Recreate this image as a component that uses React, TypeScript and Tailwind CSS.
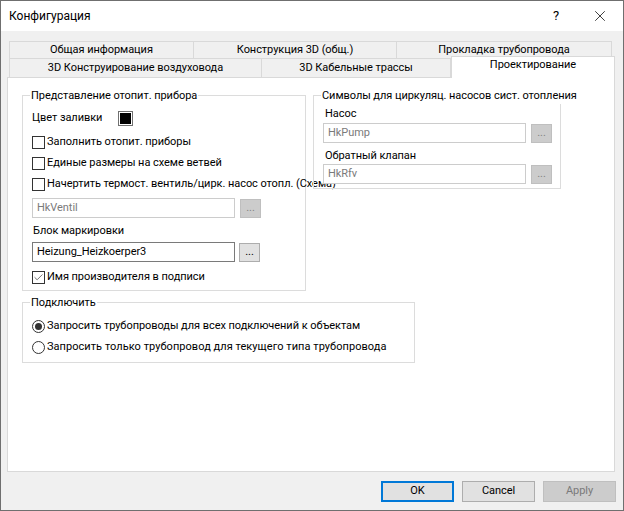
import { Check, X } from 'lucide-react'

const font = "[font-family:Roboto,sans-serif]"

function CheckRow({ label, checked, className }: { label: string; checked?: boolean; className?: string }) {
  return (
    <div className={`flex items-center h-[14px] whitespace-nowrap ${className ?? ''}`}>
      <div className="w-[13px] h-[13px] border border-[#333333] bg-white flex items-center justify-center shrink-0">
        {checked && <Check size={11} strokeWidth={1.5} className="text-[#333333]" />}
      </div>
      <span className="ml-[2px]">{label}</span>
    </div>
  )
}

function RadioRow({ label, checked, className }: { label: string; checked?: boolean; className?: string }) {
  return (
    <div className={`flex items-center h-[14px] whitespace-nowrap ${className ?? ''}`}>
      <div className="w-[13px] h-[13px] rounded-full border border-[#333333] bg-white flex items-center justify-center shrink-0">
        {checked && <div className="w-[7px] h-[7px] rounded-full bg-[#333333]" />}
      </div>
      <span className="ml-[2px]">{label}</span>
    </div>
  )
}

function PathField({ value, disabled, className }: { value: string; disabled?: boolean; className?: string }) {
  return (
    <div className={`flex items-center relative z-10 ${className ?? ''}`}>
      <div className={`w-[203px] h-[20px] border bg-white px-[4px] leading-[18px] ${disabled ? 'border-[#cccccc] text-[#7a7a7a]' : 'border-[#7a7a7a] text-black'}`}>
        {value}
      </div>
      <div className={`w-[21px] h-[19px] border flex items-center justify-center leading-none pb-[2px] ${disabled ? 'ml-[5px] bg-[#cccccc] border-[#bfbfbf] text-[#838383]' : 'ml-[4px] bg-[#e1e1e1] border-[#adadad] text-black'}`}>
        ...
      </div>
    </div>
  )
}

function Group({ title, className, children }: { title: string; className?: string; children: React.ReactNode }) {
  return (
    <div className={`relative border border-[#dcdcdc] ${className ?? ''}`}>
      <span className="absolute left-[7px] top-[-8px] bg-white px-[1px] leading-[16px] whitespace-nowrap z-10">{title}</span>
      {children}
    </div>
  )
}

function Tab({ label, className }: { label: string; className?: string }) {
  return (
    <div className={`flex items-center justify-center pt-[1px] bg-[#f0f0f0] border border-[#d9d9d9] border-b-0 border-l-0 first:border-l ${className ?? ''}`}>
      {label}
    </div>
  )
}

export default function App() {
  return (
    <div className={`w-[624px] h-[511px] border border-[#6f6f6f] flex flex-col overflow-hidden text-[11px] tracking-[-0.05px] text-black ${font}`}>
      {/* Title bar */}
      <div className="h-[30px] bg-white flex items-center shrink-0">
        <span className="ml-[8px] text-[12px] tracking-normal">Конфигурация</span>
        <span className="ml-auto text-[13px]">?</span>
        <X size={18} strokeWidth={1} className="ml-[32px] mr-[14px]" />
      </div>

      {/* Dialog body */}
      <div className="flex-1 bg-[#f0f0f0] flex flex-col px-[6px] pt-[10px]">
        <div className="flex pl-[2px] h-[17px]">
          <Tab label="Общая информация" className="w-[185px]" />
          <Tab label="Конструкция 3D (общ.)" className="w-[203px]" />
          <Tab label="Прокладка трубопровода" className="w-[215px]" />
        </div>
        <div className="flex pl-[2px] h-[19px] items-end relative">
          <Tab label="3D Конструирование воздуховода" className="w-[253px] h-[19px]" />
          <Tab label="3D Кабельные трассы" className="w-[189px] h-[19px]" />
          <div className="w-[164px] h-[22px] -mb-px bg-white border border-[#d9d9d9] border-b-0 z-10 flex justify-center relative">
            Проектирование
          </div>
        </div>

        <div className="h-[395px] w-[608px] bg-white border border-[#d9d9d9] pl-[14px] pt-[17px]">
          <div className="flex items-start">
            <Group title="Представление отопит. прибора" className="w-[284px] h-[196px] pl-[9px] pt-[14px]">
              <div className="flex items-center h-[16px]">
                <span className="w-[86px] pt-[1px]">Цвет заливки</span>
                <div className="w-[15px] h-[15px] border border-[#707070] p-[1px]">
                  <div className="w-full h-full bg-black" />
                </div>
              </div>
              <CheckRow label="Заполнить отопит. приборы" className="mt-[9px]" />
              <CheckRow label="Единые размеры на схеме ветвей" className="mt-[7px]" />
              <CheckRow label="Начертить термост. вентиль/цирк. насос отопл. (Схема)" className="mt-[7px]" />
              <PathField value="HkVentil" disabled className="mt-[7px]" />
              <div className="ml-[1px] mt-[5px] h-[16px] leading-[16px]">Блок маркировки</div>
              <PathField value="Heizung_Heizkoerper3" className="mt-[3px]" />
              <CheckRow label="Имя производителя в подписи" checked className="mt-[8px]" />
            </Group>
            <Group title="Символы для циркуляц. насосов сист. отопления" className="ml-[7px] w-[248px] h-[94px] pl-[9px] pt-[10px]">
              <div className="ml-[2px] h-[16px] leading-[16px]">Насос</div>
              <PathField value="HkPump" disabled className="mt-[1px]" />
              <div className="ml-[2px] mt-[5px] h-[16px] leading-[16px]">Обратный клапан</div>
              <PathField value="HkRfv" disabled />
            </Group>
          </div>

          <Group title="Подключить" className="mt-[11px] w-[393px] h-[61px] pl-[9px] pt-[16px]">
            <RadioRow label="Запросить трубопроводы для всех подключений к объектам" checked />
            <RadioRow label="Запросить только трубопровод для текущего типа трубопровода" className="mt-[7px] tracking-[0.05px]" />
          </Group>
        </div>

        <div className="flex mt-[9px] pl-[374px] gap-[8px]">
          <div className="w-[73px] h-[21px] border-2 border-[#0078d7] bg-[#e1e1e1] flex items-center justify-center">OK</div>
          <div className="w-[73px] h-[21px] border border-[#adadad] bg-[#e1e1e1] flex items-center justify-center">Cancel</div>
          <div className="w-[73px] h-[21px] border border-[#bfbfbf] bg-[#cccccc] flex items-center justify-center text-[#7a7a7a]">Apply</div>
        </div>
      </div>
    </div>
  )
}
